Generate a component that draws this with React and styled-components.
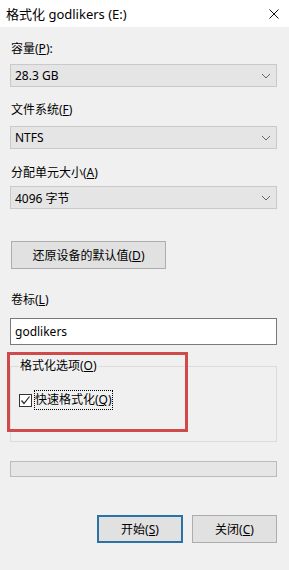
import React from "react";
import styled, { createGlobalStyle } from "styled-components";

const GlobalStyle = createGlobalStyle`
    html, body {
        margin: 0;
        padding: 0;
        background: #f0f0f0;
    }
    body {
        font-family: "Noto Sans", "Noto Sans CJK SC", sans-serif;
        font-size: 12px;
        color: #000;
    }
`;

const Window = styled.div`
    width: 289px;
    height: 570px;
    background: #f0f0f0;
    overflow: hidden;
`;

const TitleBar = styled.div`
    height: 27px;
    background: #fff;
    display: flex;
    align-items: center;
    justify-content: space-between;
    padding: 0 10px 0 6px;
    box-sizing: border-box;
    font-size: 13px;
`;

const Body = styled.div`
    padding: 0 12px 0 10px;
    display: flex;
    flex-direction: column;
`;

const Label = styled.div`
    line-height: 16px;
    height: 16px;
    margin-top: ${p => p.top}px;
    margin-left: 1px;
`;

const Select = styled.div`
    height: 23px;
    margin-top: ${p => p.top}px;
    background: #e5e5e5;
    border: 1px solid #c9c9c9;
    box-sizing: border-box;
    display: flex;
    align-items: center;
    justify-content: space-between;
    padding: 0 5px 0 4px;
`;

const Button = styled.div`
    width: ${p => p.w}px;
    height: 28px;
    box-sizing: border-box;
    background: #e1e1e1;
    border: ${p => (p.primary ? "2px solid #2b73a6" : "1px solid #adadad")};
    display: flex;
    align-items: center;
    justify-content: center;
`;

const RestoreRow = styled.div`
    margin-top: 32px;
    padding-left: 1px;
`;

const TextInput = styled.div`
    height: 27px;
    margin-top: 10px;
    background: #fff;
    border: 1px solid #7a7a7a;
    box-sizing: border-box;
    display: flex;
    align-items: center;
    padding-left: 4px;
`;

const GroupBox = styled.div`
    position: relative;
    margin-top: 21px;
    height: 76px;
    border: 1px solid #dcdcdc;
    box-sizing: border-box;
`;

const GroupTitle = styled.div`
    position: absolute;
    left: 8px;
    top: -9px;
    padding: 0 1px;
    background: #f0f0f0;
    line-height: 16px;
`;

const Highlight = styled.div`
    position: absolute;
    left: -4px;
    top: -15px;
    width: 181px;
    height: 80px;
    border: 3px solid #cf4a4a;
    box-sizing: border-box;
    pointer-events: none;
`;

const CheckRow = styled.div`
    display: flex;
    align-items: center;
    margin: 23px 0 0 8px;
    gap: 2px;
`;

const Box = styled.div`
    width: 13px;
    height: 13px;
    border: 1px solid #333;
    box-sizing: border-box;
    background: #fff;
    display: flex;
    align-items: center;
    justify-content: center;
`;

const FocusText = styled.span`
    border: 1px dotted #000;
    padding: 1px 0;
    line-height: 16px;
`;

const Progress = styled.div`
    height: 16px;
    margin-top: 19px;
    background: #e6e6e6;
    border: 1px solid #bcbcbc;
    box-sizing: border-box;
`;

const Footer = styled.div`
    display: flex;
    justify-content: flex-end;
    gap: 9px;
    margin-top: 38px;
`;

const Chevron = () => (
    <svg width="10" height="6" viewBox="0 0 10 6">
        <path d="M1 1 L5 5 L9 1" fill="none" stroke="#666" strokeWidth="1" />
    </svg>
);

const App = () => {
    return (
        <>
            <GlobalStyle />
            <Window>
                <TitleBar>
                    <span>格式化 godlikers (E:)</span>
                    <svg width="10" height="10" viewBox="0 0 10 10">
                        <path d="M0.5 0.5 L9.5 9.5 M9.5 0.5 L0.5 9.5" stroke="#111" strokeWidth="1" />
                    </svg>
                </TitleBar>
                <Body>
                    <Label top={14}>容量(<u>P</u>):</Label>
                    <Select top={7}>
                        <span>28.3 GB</span>
                        <Chevron />
                    </Select>
                    <Label top={15}>文件系统(<u>F</u>)</Label>
                    <Select top={8}>
                        <span>NTFS</span>
                        <Chevron />
                    </Select>
                    <Label top={16}>分配单元大小(<u>A</u>)</Label>
                    <Select top={5}>
                        <span>4096 字节</span>
                        <Chevron />
                    </Select>
                    <RestoreRow>
                        <Button w={155}>还原设备的默认值(<u>D</u>)</Button>
                    </RestoreRow>
                    <Label top={23}>卷标(<u>L</u>)</Label>
                    <TextInput>godlikers</TextInput>
                    <GroupBox>
                        <GroupTitle>格式化选项(<u>O</u>)</GroupTitle>
                        <Highlight />
                        <CheckRow>
                            <Box>
                                <svg width="11" height="11" viewBox="0 0 11 11">
                                    <path d="M1.5 5.5 L4 8.5 L9.5 1.5" fill="none" stroke="#222" strokeWidth="1.2" />
                                </svg>
                            </Box>
                            <FocusText>快速格式化(<u>Q</u>)</FocusText>
                        </CheckRow>
                    </GroupBox>
                    <Progress />
                    <Footer>
                        <Button w={86} primary>开始(<u>S</u>)</Button>
                        <Button w={85}>关闭(<u>C</u>)</Button>
                    </Footer>
                </Body>
            </Window>
        </>
    );
};

export default App;
